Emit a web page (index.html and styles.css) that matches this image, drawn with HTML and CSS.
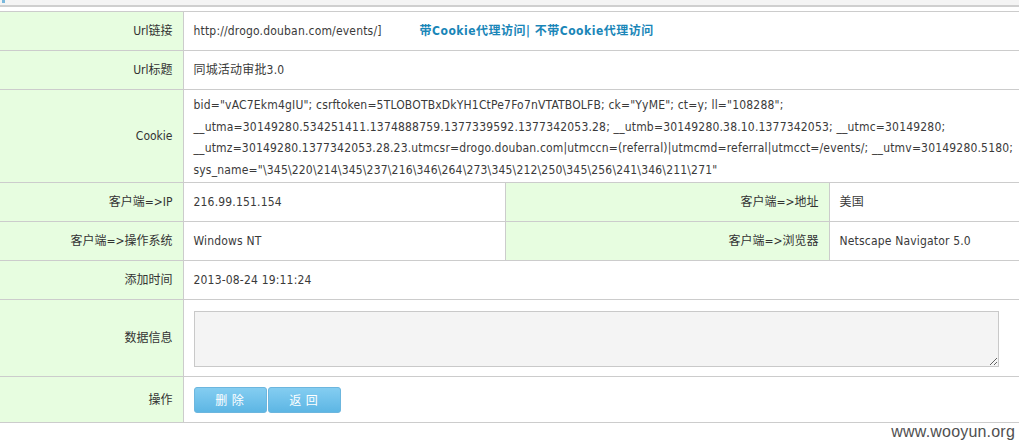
FILE: index.html
```html
<!DOCTYPE html>
<html lang="zh-CN">
<head>
<meta charset="utf-8">
<title>详情</title>
<link rel="stylesheet" href="styles.css">
</head>
<body>
<div class="topbar"><span class="topicon"></span></div>
<table class="detail">
  <colgroup>
    <col class="c-label">
    <col class="c-value">
    <col class="c-label2">
    <col>
  </colgroup>
  <tr>
    <th>Url链接</th>
    <td colspan="3">http://drogo.douban.com/events/]<span class="links"><a href="#">带Cookie代理访问</a>| <a href="#">不带Cookie代理访问</a></span></td>
  </tr>
  <tr>
    <th>Url标题</th>
    <td colspan="3">同城活动审批3.0</td>
  </tr>
  <tr class="cookie">
    <th>Cookie</th>
    <td colspan="3">bid="vAC7Ekm4gIU"; csrftoken=5TLOBOTBxDkYH1CtPe7Fo7nVTATBOLFB; ck="YyME"; ct=y; ll="108288";<br>__utma=30149280.534251411.1374888759.1377339592.1377342053.28; __utmb=30149280.38.10.1377342053; __utmc=30149280;<br>__utmz=30149280.1377342053.28.23.utmcsr=drogo.douban.com|utmccn=(referral)|utmcmd=referral|utmcct=/events/; __utmv=30149280.5180;<br>sys_name="\345\220\214\345\237\216\346\264\273\345\212\250\345\256\241\346\211\271"</td>
  </tr>
  <tr>
    <th>客户端=&gt;IP</th>
    <td>216.99.151.154</td>
    <th>客户端=&gt;地址</th>
    <td>美国</td>
  </tr>
  <tr>
    <th>客户端=&gt;操作系统</th>
    <td>Windows NT</td>
    <th>客户端=&gt;浏览器</th>
    <td>Netscape Navigator 5.0</td>
  </tr>
  <tr>
    <th>添加时间</th>
    <td colspan="3">2013-08-24 19:11:24</td>
  </tr>
  <tr class="data">
    <th>数据信息</th>
    <td colspan="3"><textarea class="info"></textarea></td>
  </tr>
  <tr class="ops">
    <th>操作</th>
    <td colspan="3"><button class="btn" type="button">删 除</button><button class="btn" type="button">返 回</button></td>
  </tr>
</table>
<div class="watermark">www.wooyun.org</div>
</body>
</html>
```
FILE: styles.css
```css
html, body {
  margin: 0;
  padding: 0;
  background: #fff;
  overflow: hidden;
}
body {
  position: relative;
  width: 1019px;
  height: 442px;
  font-family: "DejaVu Sans Condensed", "DejaVu Sans", "Noto Sans CJK SC", sans-serif;
  font-stretch: condensed;
  font-size: 12px;
  color: #333;
}
.topbar {
  height: 5px;
  background: #f4f4f4;
  border-bottom: 2px solid #cfcfcf;
  margin-bottom: 4px;
}
.topicon {
  display: block;
  width: 3px;
  height: 3px;
  margin-left: 2px;
  background: #7ab8dc;
}
.detail {
  width: 1021px;
  border-collapse: collapse;
  table-layout: fixed;
}
.c-label { width: 183px; }
.c-value { width: 322px; }
.c-label2 { width: 324px; }
.detail th,
.detail td {
  border-top: 1px solid #cccccc;
  border-bottom: 1px solid #cccccc;
  border-left: 1px solid #cccccc;
  height: 38px;
  padding: 0 10px;
  line-height: 22px;
  vertical-align: middle;
  white-space: nowrap;
}
.detail tr > :first-child {
  border-left: none;
}
.detail th {
  background: #e7fde0;
  text-align: right;
  font-weight: normal;
  color: #333;
}
.detail td {
  background: #fff;
  text-align: left;
  color: #3a3a3a;
  letter-spacing: 0.18px;
}
.links {
  margin-left: 38px;
  font-weight: bold;
  letter-spacing: 0.5px;
  color: #1a86b8;
}
.links a {
  color: #1a86b8;
  text-decoration: none;
}
.cookie th {
  height: 92px;
}
.cookie td {
  height: 88px;
  padding-top: 4px;
  line-height: 21.5px;
}
.data th,
.data td {
  height: 76px;
}
.info {
  display: block;
  box-sizing: border-box;
  width: 805px;
  height: 56px;
  margin: 1px 0 0 0;
  background: #f4f4f4;
  border: 1px solid #c9c9c9;
  font-family: inherit;
  font-size: 12px;
}
.ops th,
.ops td {
  height: 45px;
}
.btn {
  box-sizing: border-box;
  width: 73px;
  height: 26px;
  margin: 0 1px 0 0;
  padding: 0;
  border: 1px solid #6cb6de;
  border-radius: 3px;
  background: linear-gradient(#84cdf1, #5db6e4);
  color: #fff;
  font-family: "Noto Sans CJK SC", sans-serif;
  font-size: 12px;
  letter-spacing: 1px;
  line-height: 24px;
  vertical-align: middle;
}
.watermark {
  position: absolute;
  right: 4px;
  bottom: 1px;
  font-family: "Liberation Sans", Arial, sans-serif;
  font-size: 16px;
  color: #505050;
  letter-spacing: 0.2px;
}
```
